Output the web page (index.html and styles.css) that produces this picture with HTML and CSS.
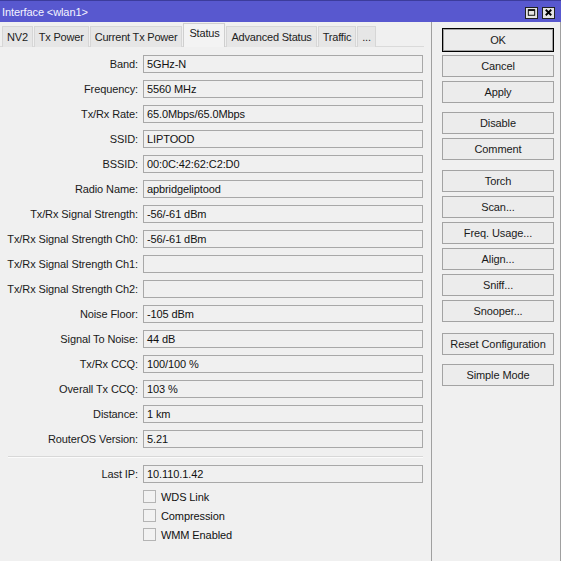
FILE: index.html
```html
<!DOCTYPE html>
<html>
<head>
<meta charset="utf-8">
<link rel="stylesheet" href="styles.css">
</head>
<body>
<div class="window">
  <div class="titlebar">
    <span class="title">Interface &lt;wlan1&gt;</span>
    <div class="ctrls">
      <span class="ctrl"><svg width="12" height="11" viewBox="0 0 12 11"><rect x="2.5" y="2.5" width="7" height="6" fill="none" stroke="#000" stroke-width="1"/><line x1="2.5" y1="3" x2="9.5" y2="3" stroke="#000" stroke-width="1.5"/></svg></span>
      <span class="ctrl"><svg width="12" height="11" viewBox="0 0 12 11"><path d="M3 2.5 L9 8.5 M9 2.5 L3 8.5" stroke="#000" stroke-width="2" fill="none"/></svg></span>
    </div>
  </div>
  <div class="main">
    <div class="left">
      <div class="tabs">
        <span class="tab">NV2</span>
        <span class="tab">Tx Power</span>
        <span class="tab">Current Tx Power</span>
        <span class="tab active">Status</span>
        <span class="tab">Advanced Status</span>
        <span class="tab">Traffic</span>
        <span class="tab">...</span>
      </div>
      <div class="page">
        <div class="form">
          <label>Band:</label><div class="field">5GHz-N</div>
          <label>Frequency:</label><div class="field">5560 MHz</div>
          <label>Tx/Rx Rate:</label><div class="field">65.0Mbps/65.0Mbps</div>
          <label>SSID:</label><div class="field">LIPTOOD</div>
          <label>BSSID:</label><div class="field">00:0C:42:62:C2:D0</div>
          <label>Radio Name:</label><div class="field">apbridgeliptood</div>
          <label>Tx/Rx Signal Strength:</label><div class="field">-56/-61 dBm</div>
          <label>Tx/Rx Signal Strength Ch0:</label><div class="field">-56/-61 dBm</div>
          <label>Tx/Rx Signal Strength Ch1:</label><div class="field"></div>
          <label>Tx/Rx Signal Strength Ch2:</label><div class="field"></div>
          <label>Noise Floor:</label><div class="field">-105 dBm</div>
          <label>Signal To Noise:</label><div class="field">44 dB</div>
          <label>Tx/Rx CCQ:</label><div class="field">100/100 %</div>
          <label>Overall Tx CCQ:</label><div class="field">103 %</div>
          <label>Distance:</label><div class="field">1 km</div>
          <label>RouterOS Version:</label><div class="field">5.21</div>
        </div>
        <div class="sep"></div>
        <div class="form form2">
          <label>Last IP:</label><div class="field">10.110.1.42</div>
        </div>
        <div class="checks">
          <div class="check"><span class="box"></span><span>WDS Link</span></div>
          <div class="check"><span class="box"></span><span>Compression</span></div>
          <div class="check"><span class="box"></span><span>WMM Enabled</span></div>
        </div>
      </div>
    </div>
    <div class="right">
      <button class="btn default">OK</button>
      <button class="btn">Cancel</button>
      <button class="btn">Apply</button>
      <button class="btn g1">Disable</button>
      <button class="btn">Comment</button>
      <button class="btn g2">Torch</button>
      <button class="btn">Scan...</button>
      <button class="btn">Freq. Usage...</button>
      <button class="btn">Align...</button>
      <button class="btn">Sniff...</button>
      <button class="btn">Snooper...</button>
      <button class="btn g3">Reset Configuration</button>
      <button class="btn g4">Simple Mode</button>
    </div>
  </div>
</div>
</body>
</html>
```
FILE: styles.css
```css
* { box-sizing: border-box; }
html, body {
  margin: 0;
  padding: 0;
  background: #f0f0f0;
}
body {
  font-family: "Liberation Sans", Arial, sans-serif;
  font-size: 11px;
  letter-spacing: -0.1px;
  color: #111;
  width: 561px;
  height: 561px;
  overflow: hidden;
}
.window {
  display: flex;
  flex-direction: column;
  height: 561px;
}
.titlebar {
  height: 22px;
  background: #5858cf;
  border-top: 1px solid #3c3c9c;
  display: flex;
  align-items: center;
  justify-content: space-between;
  padding: 0 6px 0 2px;
}
.title {
  color: #f4f4ff;
  font-size: 11px;
}
.ctrls {
  display: flex;
  gap: 4px;
  margin-top: 2px;
}
.ctrl {
  width: 13px;
  height: 12px;
  background: #e4e4e4;
  border: 1px solid #222;
  display: flex;
  align-items: center;
  justify-content: center;
}
.ctrl svg { display: block; }
.main {
  flex: 1;
  display: flex;
}
.left {
  width: 432px;
  border-right: 1px solid #a0a0a0;
  display: flex;
  flex-direction: column;
}
.tabs {
  height: 25px;
  display: flex;
  align-items: flex-end;
  padding-left: 2px;
  gap: 1px;
  border-bottom: 1px solid #dadada;
  margin-right: 7px;
}
.tab {
  height: 21px;
  line-height: 20px;
  padding: 0 4px;
  letter-spacing: -0.2px;
  background: #e6e6e6;
  border: 1px solid #d6d6d6;
  border-bottom: none;
  color: #222;
  margin-bottom: -1px;
}
.tab.active {
  height: 24px;
  line-height: 19px;
  background: #f3f3f3;
  border-color: #cfcfcf;
  padding: 0 5px;
  margin-bottom: -1px;
}
.page {
  flex: 1;
  padding-top: 8px;
}
.form {
  display: grid;
  grid-template-columns: 138px 280px;
  column-gap: 5px;
  row-gap: 7px;
}
.form label {
  text-align: right;
  line-height: 18px;
  white-space: nowrap;
  color: #1a1a1a;
}
.field {
  height: 18px;
  border: 1px solid #a8a8a8;
  background: #f0f0f0;
  padding-left: 3px;
  line-height: 16px;
  color: #111;
}
.sep {
  margin: 8px 8px 0 8px;
  width: 415px;
  border-top: 1px solid #d8d8d8;
  border-bottom: 1px solid #fbfbfb;
}
.form2 {
  margin-top: 7px;
}
.checks {
  margin-top: 4px;
  padding-left: 143px;
  display: flex;
  flex-direction: column;
}
.check {
  height: 19px;
  display: flex;
  align-items: center;
  gap: 5px;
}
.box {
  width: 13px;
  height: 13px;
  border: 1px solid #b4b4b4;
  background: #f2f2f2;
}
.right {
  width: 129px;
  border-right: 1px solid #a0a0a0;
  padding: 6px 6px 0 10px;
  display: flex;
  flex-direction: column;
  gap: 4px;
}
.btn {
  width: 112px;
  height: 22px;
  padding: 0;
  font-family: inherit;
  font-size: 11px;
  letter-spacing: -0.1px;
  color: #1a1a1a;
  background: #ececec;
  border: 1px solid #a3a3a3;
  border-radius: 0;
  text-align: center;
  line-height: 20px;
}
.btn.default {
  height: 24px;
  border: 1px solid #000;
  box-shadow: inset 0 0 0 1px #a3a3a3;
  margin-bottom: -1px;
}
.btn.g1 { margin-top: 5px; }
.btn.g2 { margin-top: 6px; }
.btn.g3 { margin-top: 7px; }
.btn.g4 { margin-top: 5px; }
```
